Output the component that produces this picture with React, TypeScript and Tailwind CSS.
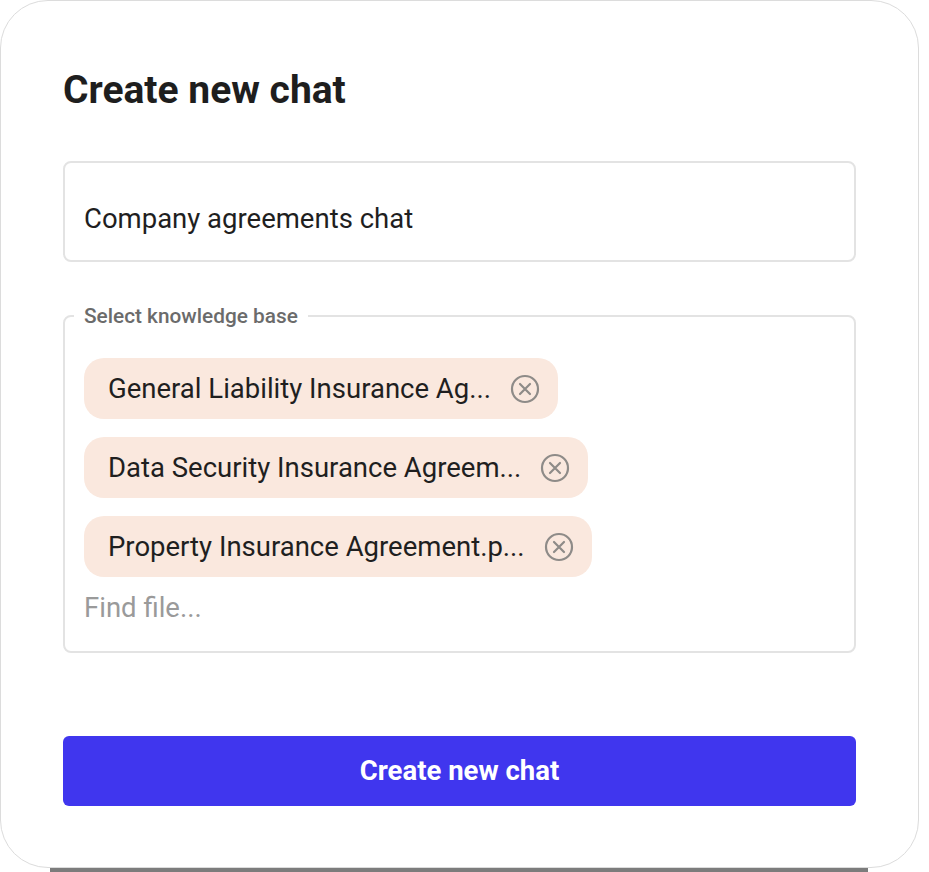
import React from "react";

function CloseIcon() {
  return (
    <svg width="30" height="30" viewBox="0 0 30 30" fill="none" className="shrink-0">
      <circle cx="15" cy="15" r="13" stroke="#8e8b88" strokeWidth="2.2" />
      <path d="M10 10 L20 20 M20 10 L10 20" stroke="#8e8b88" strokeWidth="2.2" strokeLinecap="round" />
    </svg>
  );
}

function Chip({ label }: { label: string }) {
  return (
    <div className="flex h-[61px] items-center self-start rounded-[20px] bg-[#fae8de] pl-[24px] pr-[18px]">
      <span className="text-[27.5px] leading-[32px] text-[#1f1f1f] whitespace-nowrap">{label}</span>
      <span className="ml-[19px] flex items-center">
        <CloseIcon />
      </span>
    </div>
  );
}

export default function App() {
  return (
    <div className="min-h-[872px] w-[929px] bg-white" style={{ fontFamily: "Roboto, 'Noto Sans', sans-serif" }}>
      <div className="h-[868px] w-[919px] rounded-[48px] border border-[#dcdcdc] bg-white pl-[62px] pr-[62px] pt-[66px]">
        <h1 className="text-[39px] font-bold leading-[46px] text-[#1e1e1e]">Create new chat</h1>
        <div className="mt-[48px] h-[101px] rounded-[8px] border-2 border-[#e3e3e3] pl-[19px] pt-[40px]">
          <div className="text-[27.5px] leading-[32px] text-[#1f1f1f]">Company agreements chat</div>
        </div>
        <fieldset className="mt-[42px] h-[349px] rounded-[8px] border-2 border-[#e3e3e3] px-[19px]">
          <legend className="ml-[-10px] px-[10px] text-[20.8px] font-medium leading-[24px] text-[#6b6b6b]">Select knowledge base</legend>
          <div className="flex flex-col gap-[18px] pt-[30px]">
            <Chip label="General Liability Insurance Ag..." />
            <Chip label="Data Security Insurance Agreem..." />
            <Chip label="Property Insurance Agreement.p..." />
          </div>
          <div className="mt-[15px] text-[27.5px] leading-[32px] text-[#9a9a9a]">Find file...</div>
        </fieldset>
        <button className="mt-[83px] flex h-[70px] w-full items-center justify-center rounded-[6px] bg-[#4036ee] text-[27.5px] font-bold text-white">
          Create new chat
        </button>
      </div>
      <div className="ml-[50px] h-[4px] w-[818px] bg-[#7c7c7c]" />
    </div>
  );
}
